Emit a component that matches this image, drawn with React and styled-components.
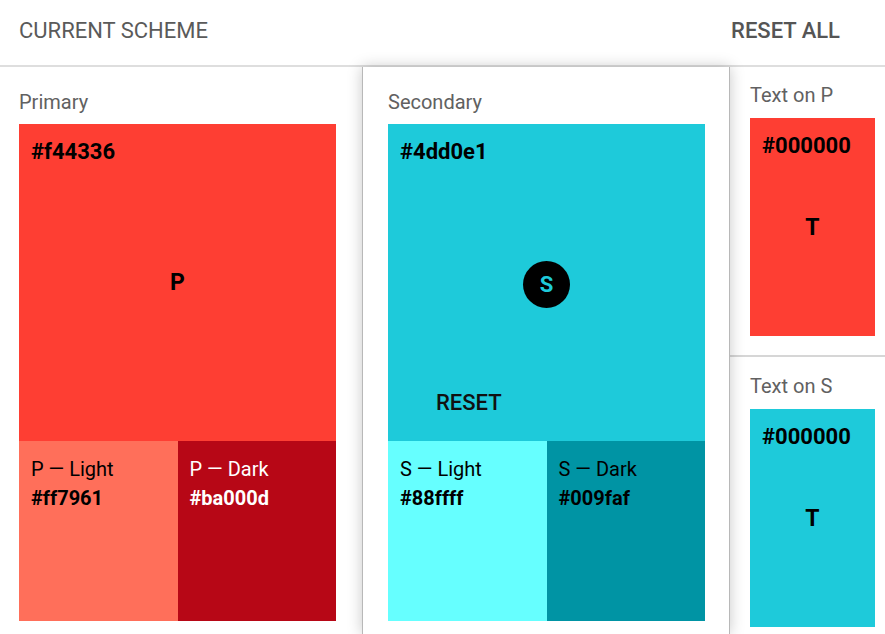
import React from "react";
import styled, { createGlobalStyle } from "styled-components";

const GlobalStyle = createGlobalStyle`
  html, body {
    margin: 0;
    padding: 0;
    background: #ffffff;
    overflow: hidden;
  }
  body {
    font-family: Roboto, "Liberation Sans", Arial, sans-serif;
  }
  * {
    box-sizing: border-box;
  }
`;

const Page = styled.div`
  width: 885px;
  height: 634px;
  display: flex;
  flex-direction: column;
  overflow: hidden;
`;

const Header = styled.header`
  height: 67px;
  flex-shrink: 0;
  display: flex;
  align-items: center;
  justify-content: space-between;
  padding: 0 45px 4px 19px;
  border-bottom: 2px solid #dedede;
`;

const HeaderTitle = styled.div`
  font-size: 22px;
  color: #5a5a5a;
`;

const HeaderButton = styled.button`
  border: none;
  background: none;
  padding: 0;
  font-family: inherit;
  font-size: 22px;
  font-weight: 500;
  color: #555555;
  cursor: pointer;
`;

const Row = styled.div`
  flex: 1;
  display: flex;
  min-height: 0;
`;

const Column = styled.section`
  width: 362px;
  flex-shrink: 0;
  padding: 24px 26px 0 19px;
  display: flex;
  flex-direction: column;
`;

const Card = styled.section`
  width: 368px;
  flex-shrink: 0;
  padding: 24px 24px 0 25px;
  background: #ffffff;
  border-left: 1px solid #b8b8b8;
  border-right: 1px solid #b8b8b8;
  box-shadow: 0 0 14px rgba(0, 0, 0, 0.22);
  position: relative;
  z-index: 1;
  display: flex;
  flex-direction: column;
`;

const Label = styled.div`
  font-size: 20px;
  line-height: 22px;
  color: #616161;
  margin-bottom: ${(p) => p.$gap || 11}px;
`;

const Swatch = styled.div`
  display: grid;
  flex-shrink: 0;
  width: ${(p) => p.$w || 317}px;
  height: ${(p) => p.$h || 317}px;
  background: ${(p) => p.$bg};
  color: ${(p) => p.$fg || "#000"};
`;

const Hex = styled.div`
  grid-area: 1 / 1;
  align-self: start;
  justify-self: start;
  padding: 12px 0 0 12px;
  font-size: 22px;
  line-height: 32px;
  font-weight: 700;
`;

const Letter = styled.div`
  grid-area: 1 / 1;
  align-self: center;
  justify-self: center;
  font-size: 23px;
  font-weight: 700;
`;

const Circle = styled.div`
  grid-area: 1 / 1;
  align-self: center;
  justify-self: center;
  margin-top: 4px;
  width: 47px;
  height: 47px;
  border-radius: 50%;
  background: #000;
  color: #1ecada;
  display: flex;
  align-items: center;
  justify-content: center;
  font-size: 22px;
  font-weight: 700;
`;

const ResetButton = styled.button`
  grid-area: 1 / 1;
  align-self: end;
  justify-self: start;
  margin: 0 0 21px 32px;
  height: 36px;
  padding: 0 16px;
  border: none;
  background: transparent;
  font-family: inherit;
  font-size: 22px;
  font-weight: 500;
  color: #111;
  cursor: pointer;
`;

const Shades = styled.div`
  display: flex;
  width: 317px;
`;

const Shade = styled.div`
  flex: 1;
  height: 180px;
  padding: 14px 12px;
  background: ${(p) => p.$bg};
  color: ${(p) => p.$fg || "#000"};
`;

const ShadeName = styled.div`
  font-size: 20px;
  line-height: 28px;
`;

const ShadeHex = styled.div`
  font-size: 20px;
  line-height: 30px;
  font-weight: 700;
`;

const Side = styled.aside`
  flex: 1;
  display: flex;
  flex-direction: column;
`;

const SideBlock = styled.div`
  padding: ${(p) => p.$top}px 10px 19px 20px;
  border-bottom: ${(p) => (p.$divider ? "2px solid #d6d6d6" : "none")};
`;

const colors = {
  primary: "#fe3e33",
  primaryLight: "#ff6f5a",
  primaryDark: "#b70716",
  secondary: "#1ecada",
  secondaryLight: "#66ffff",
  secondaryDark: "#0094a4",
};

const App = () => {
  return (
    <Page>
      <GlobalStyle />
      <Header>
        <HeaderTitle>CURRENT SCHEME</HeaderTitle>
        <HeaderButton>RESET ALL</HeaderButton>
      </Header>
      <Row>
        <Column>
          <Label>Primary</Label>
          <Swatch $bg={colors.primary}>
            <Hex>#f44336</Hex>
            <Letter>P</Letter>
          </Swatch>
          <Shades>
            <Shade $bg={colors.primaryLight}>
              <ShadeName>P — Light</ShadeName>
              <ShadeHex>#ff7961</ShadeHex>
            </Shade>
            <Shade $bg={colors.primaryDark} $fg="#ffffff">
              <ShadeName>P — Dark</ShadeName>
              <ShadeHex>#ba000d</ShadeHex>
            </Shade>
          </Shades>
        </Column>
        <Card>
          <Label>Secondary</Label>
          <Swatch $bg={colors.secondary}>
            <Hex>#4dd0e1</Hex>
            <Circle>S</Circle>
            <ResetButton>RESET</ResetButton>
          </Swatch>
          <Shades>
            <Shade $bg={colors.secondaryLight}>
              <ShadeName>S — Light</ShadeName>
              <ShadeHex>#88ffff</ShadeHex>
            </Shade>
            <Shade $bg={colors.secondaryDark}>
              <ShadeName>S — Dark</ShadeName>
              <ShadeHex>#009faf</ShadeHex>
            </Shade>
          </Shades>
        </Card>
        <Side>
          <SideBlock $top={17} $divider>
            <Label $gap={12}>Text on P</Label>
            <Swatch $bg={colors.primary} $w={125} $h={218}>
              <Hex>#000000</Hex>
              <Letter>T</Letter>
            </Swatch>
          </SideBlock>
          <SideBlock $top={18}>
            <Label $gap={12}>Text on S</Label>
            <Swatch $bg={colors.secondary} $w={125} $h={218}>
              <Hex>#000000</Hex>
              <Letter>T</Letter>
            </Swatch>
          </SideBlock>
        </Side>
      </Row>
    </Page>
  );
};

export default App;
